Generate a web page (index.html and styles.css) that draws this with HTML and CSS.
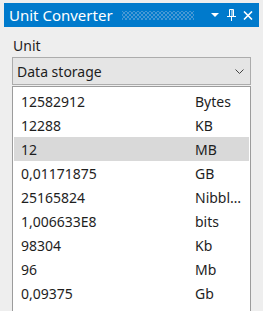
FILE: index.html
```html
<!DOCTYPE html>
<html lang="en">

<head>
    <meta charset="UTF-8">
    <title>Unit Converter</title>
    <link rel="stylesheet" href="styles.css">
</head>

<body>
    <div class="titlebar">
        <span class="title">Unit Converter</span>
        <span class="grip"></span>
        <svg class="tb-icon" width="9" height="6" viewBox="0 0 9 6">
            <path d="M0 1 H8 L4 5 Z" fill="#fff"/>
        </svg>
        <svg class="tb-icon" width="9" height="12" viewBox="0 0 9 12">
            <path d="M2.5 0.5 H6.5 V7.5 H2.5 Z M5 1 V7" stroke="#fff" fill="none"/>
            <path d="M0 7.5 H9 M4.5 7.5 V12" stroke="#fff" fill="none"/>
        </svg>
        <svg class="tb-icon" width="10" height="9" viewBox="0 0 10 9">
            <path d="M1 0.5 L9 8.5 M9 0.5 L1 8.5" stroke="#fff" stroke-width="1.6" fill="none"/>
        </svg>
    </div>

    <div class="panel">
        <div class="label">Unit</div>
        <div class="combo">
            <span>Data storage</span>
            <svg width="9" height="5" viewBox="0 0 9 5">
                <path d="M0.5 0.5 L4.5 4.5 L8.5 0.5" stroke="#444" fill="none"/>
            </svg>
        </div>

        <div class="list" id="unitList"></div>
    </div>

    <script>
        let rows = [
            { value: "12582912", unit: "Bytes" },
            { value: "12288", unit: "KB" },
            { value: "12", unit: "MB", selected: true },
            { value: "0,01171875", unit: "GB" },
            { value: "25165824", unit: "Nibbles" },
            { value: "1,006633E8", unit: "bits" },
            { value: "98304", unit: "Kb" },
            { value: "96", unit: "Mb" },
            { value: "0,09375", unit: "Gb" }
        ];

        let list = document.getElementById('unitList');
        rows.forEach((row) => {
            let div = document.createElement('div');
            div.className = row.selected ? "row selected" : "row";
            div.innerHTML = `
                <span class="value">${row.value}</span>
                <span class="unit">${row.unit}</span>
            `;
            list.appendChild(div);
        });
    </script>
</body>

</html>
```

FILE: styles.css
```css
html {
    overflow: hidden;
}

body {
    margin: 0;
    background-color: #eeeeee;
    font-family: "Noto Sans", "Open Sans", sans-serif;
    font-size: 14px;
    color: #1e1e1e;
    overflow: hidden;
    height: 311px;
}

.titlebar {
    margin: 3px 4px 0 4px;
    height: 24px;
    background-color: #007acc;
    color: #fff;
    display: flex;
    align-items: center;
    padding: 0 6px 0 5px;
}

.title {
    font-size: 15px;
    white-space: nowrap;
}

.grip {
    flex: 1;
    height: 9px;
    margin: 1px 10px 0 9px;
    background-image:
        radial-gradient(circle, #4c9ad6 0.7px, transparent 0.8px),
        radial-gradient(circle, #4c9ad6 0.7px, transparent 0.8px);
    background-size: 4px 4px;
    background-position: 0 0, 2px 2px;
}

.tb-icon {
    display: block;
    margin-left: 7px;
}

.panel {
    padding: 9px 12px 0 12px;
}

.label {
    padding-left: 1px;
    line-height: 19px;
    margin-bottom: 2px;
}

.combo {
    height: 26px;
    border: 1px solid #acacac;
    background-color: #e5e5e5;
    display: flex;
    align-items: center;
    justify-content: space-between;
    padding: 0 6px 0 4px;
}

.combo svg {
    display: block;
}

.list {
    margin-top: 1px;
    border: 1px solid #9c9c9c;
    border-bottom: none;
    background-color: #fff;
    padding: 2px 1px;
    height: 222px;
}

.row {
    display: flex;
    align-items: center;
    height: 24px;
    padding-left: 7px;
}

.row.selected {
    background-color: #d9d9d9;
}

.value {
    width: 174px;
}

.unit {
    width: 49px;
    white-space: nowrap;
    overflow: hidden;
    text-overflow: ellipsis;
}
```
